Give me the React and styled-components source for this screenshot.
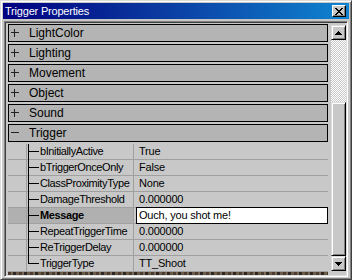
import React from 'react';
import styled, { createGlobalStyle } from 'styled-components';

const Global = createGlobalStyle`
  html, body { margin: 0; padding: 0; background: #c8c8c8; }
  body { font-family: "Liberation Sans", Arial, sans-serif; font-size: 11px; color: #000; }
  * { box-sizing: border-box; }
`;

const Window = styled.div`
  width: 352px;
  height: 280px;
  background: #c8c8c8;
  border: 1px solid;
  border-color: #dcdcdc #404040 #404040 #dcdcdc;
  box-shadow: inset 1px 1px #fff, inset -1px -1px #808080;
  padding: 2px;
  display: flex;
  flex-direction: column;
`;

const TitleBar = styled.div`
  height: 16px;
  flex: none;
  display: flex;
  align-items: center;
  padding: 0 2px 0 2px;
  background: linear-gradient(90deg, #000080 0%, #0a3aa0 45%, #1084d0 100%);
  color: #fff;
  font-size: 11px;
  letter-spacing: -0.2px;
`;

const Title = styled.span`
  flex: 1;
  line-height: 16px;
`;

const CloseButton = styled.div`
  width: 14px;
  height: 12px;
  background: #c8c8c8;
  border: 1px solid;
  border-color: #fff #000 #000 #fff;
  box-shadow: inset -1px -1px #808080;
  display: flex;
  align-items: center;
  justify-content: center;
  margin-right: 1px;
`;

const Panel = styled.div`
  flex: 1;
  margin: 2px 1px 0;
  border: 1px solid;
  border-color: #808080 #fff #fff #808080;
  box-shadow: inset 1px 1px #404040, inset -1px -1px #dcdcdc;
  padding: 1px;
  display: flex;
  min-height: 0;
`;

const List = styled.div`
  flex: 1;
  padding: 1px 3px 0 2px;
  display: flex;
  flex-direction: column;
  overflow: hidden;
  background: #c8c8c8;
`;

const Category = styled.div`
  height: 18px;
  flex: none;
  margin-bottom: 2px;
  border: 1px solid #000;
  background: #b4b4b4;
  display: flex;
  align-items: center;
  padding-left: 2px;
  font-size: 12px;
`;

const Expander = styled.svg`
  width: 8px;
  height: 8px;
  margin-right: 10px;
  flex: none;
`;

const Row = styled.div`
  height: 16px;
  flex: none;
  display: flex;
  border-bottom: 1px solid #a0a0a0;
  background: #c8c8c8;
  letter-spacing: -0.4px;
`;

const Indent = styled.div`
  width: 19px;
  flex: none;
  border-right: 1px solid #a0a0a0;
  background: ${p => (p.$active ? '#b0b0b0' : '#c8c8c8')};
`;

const Tree = styled.div`
  width: 12px;
  flex: none;
  position: relative;
  background: ${p => (p.$active ? '#b0b0b0' : '#c8c8c8')};
  &::before {
    content: '';
    position: absolute;
    left: 1px;
    top: 0;
    width: 1px;
    bottom: ${p => (p.$last ? '7px' : '-1px')};
    background: #000;
  }
  &::after {
    content: '';
    position: absolute;
    left: 1px;
    right: 0;
    top: 7px;
    height: 1px;
    background: #000;
  }
`;

const Name = styled.div`
  width: 95px;
  flex: none;
  border-right: 1px solid #a0a0a0;
  padding-left: 1px;
  line-height: 15px;
  white-space: nowrap;
  overflow: hidden;
  font-weight: ${p => (p.$active ? 'bold' : 'normal')};
  background: ${p => (p.$active ? '#b0b0b0' : '#c8c8c8')};
`;

const Value = styled.div`
  flex: 1;
  padding-left: 5px;
  line-height: 15px;
  white-space: nowrap;
  letter-spacing: -0.2px;
`;

const EditCell = styled.div`
  flex: 1;
  display: flex;
`;

const Edit = styled.div`
  flex: 1;
  margin: -1px 0 -1px 2px;
  background: #fff;
  border: 1px solid #000;
  padding-left: 2px;
  line-height: 15px;
  white-space: nowrap;
  letter-spacing: -0.2px;
`;

const BottomStrip = styled.div`
  flex: 1;
  min-height: 3px;
  background: repeating-linear-gradient(90deg, #4a3c30 0 3px, #7a6a58 3px 5px, #2e2620 5px 8px, #6a5a48 8px 11px);
`;

const ScrollBar = styled.div`
  width: 15px;
  flex: none;
  display: flex;
  flex-direction: column;
  padding: 2px 0 4px;
  background: #c8c8c8;
`;

const ScrollButton = styled.div`
  height: 15px;
  flex: none;
  background: #c8c8c8;
  border: 1px solid;
  border-color: #dcdcdc #000 #000 #dcdcdc;
  box-shadow: inset 1px 1px #fff, inset -1px -1px #808080;
  display: flex;
  align-items: center;
  justify-content: center;
`;

const Track = styled.div`
  flex: ${p => p.$grow};
  background-color: #c8c8c8;
  background-image: conic-gradient(#fff 25%, #c8c8c8 0 50%, #fff 0 75%, #c8c8c8 0);
  background-size: 2px 2px;
`;

const Thumb = styled.div`
  flex: ${p => p.$grow};
  background: #c8c8c8;
  border: 1px solid;
  border-color: #dcdcdc #000 #000 #dcdcdc;
  box-shadow: inset 1px 1px #fff, inset -1px -1px #808080;
`;

const Arrow = ({ down }) => (
  <svg width="7" height="4" viewBox="0 0 7 4" shapeRendering="crispEdges">
    {down ? (
      <path d="M0 0h7v1H6v1H5v1H4v1H3V3H2V2H1V1H0z" fill="#000" />
    ) : (
      <path d="M3 0h1v1h1v1h1v1h1v1H0V3h1V2h1V1h1z" fill="#000" />
    )}
  </svg>
);

const CloseGlyph = () => (
  <svg width="8" height="7" viewBox="0 0 8 7" shapeRendering="crispEdges">
    <path
      d="M0 0h2v1h1v1h2V1h1V0h2v1H7v1H6v1H5v1h1v1h1v1h1v1H6V6H5V5H3v1H2v1H0V6h1V5h1V4h1V3H2V2H1V1H0z"
      fill="#000"
    />
  </svg>
);

const PlusMinus = ({ open }) => (
  <Expander viewBox="0 0 8 8" shapeRendering="crispEdges">
    <rect x="0" y="3" width="8" height="1" fill="#202020" />
    {!open && <rect x="3" y="0" width="1" height="8" fill="#202020" />}
  </Expander>
);

const categories = [
  { name: 'LightColor' },
  { name: 'Lighting' },
  { name: 'Movement' },
  { name: 'Object' },
  { name: 'Sound' },
  { name: 'Trigger', open: true },
];

const props = [
  ['bInitiallyActive', 'True'],
  ['bTriggerOnceOnly', 'False'],
  ['ClassProximityType', 'None'],
  ['DamageThreshold', '0.000000'],
  ['Message', 'Ouch, you shot me!', true],
  ['RepeatTriggerTime', '0.000000'],
  ['ReTriggerDelay', '0.000000'],
  ['TriggerType', 'TT_Shoot'],
];

export default function App() {
  return (
    <>
      <Global />
      <Window>
        <TitleBar>
          <Title>Trigger Properties</Title>
          <CloseButton>
            <CloseGlyph />
          </CloseButton>
        </TitleBar>
        <Panel>
          <List>
            {categories.map(c => (
              <Category key={c.name}>
                <PlusMinus open={c.open} />
                {c.name}
              </Category>
            ))}
            {props.map(([n, v, active], i) => (
              <Row key={n}>
                <Indent $active={active} />
                <Tree $active={active} $last={i === props.length - 1} />
                <Name $active={active}>{n}</Name>
                {active ? (
                  <EditCell>
                    <Edit>{v}</Edit>
                  </EditCell>
                ) : (
                  <Value>{v}</Value>
                )}
              </Row>
            ))}
            <BottomStrip />
          </List>
          <ScrollBar>
            <ScrollButton>
              <Arrow />
            </ScrollButton>
            <Track $grow={63} />
            <Thumb $grow={153} />
            <ScrollButton>
              <Arrow down />
            </ScrollButton>
          </ScrollBar>
        </Panel>
      </Window>
    </>
  );
}
